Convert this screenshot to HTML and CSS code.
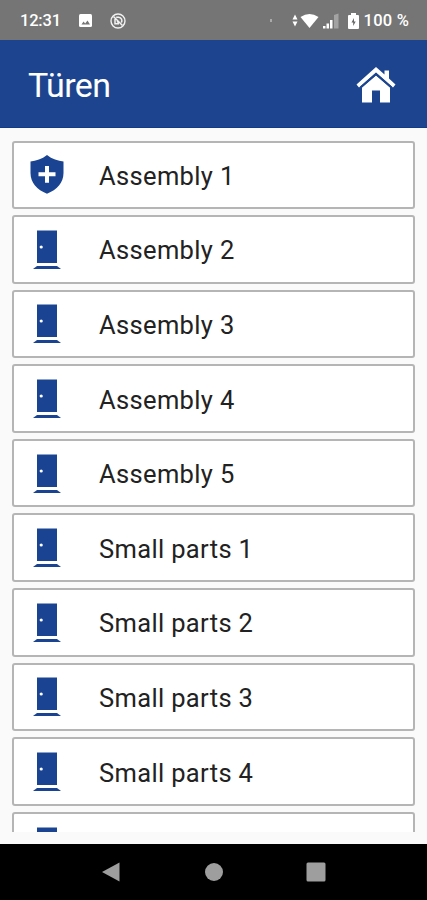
FILE: index.html
```html
<!DOCTYPE html>
<html lang="de">
<head>
    <meta charset="UTF-8">
    <meta name="viewport" content="width=device-width, initial-scale=1.0">
    <title>Türen</title>
    <link rel="stylesheet" href="styles.css">
</head>
<body>
    <!-- shared icons -->
    <svg class="icon-defs">
        <symbol id="icon-door" viewBox="0 0 36 42">
            <path d="M8 1.500h20v32.500H8z"/>
            <path d="M8 37h20l4 3H4z"/>
            <circle cx="12.2" cy="18" r="1.6" fill="#fff"/>
        </symbol>
        <symbol id="icon-shield" viewBox="0 0 36 42">
            <path d="M18 1C23 5 29 7 34.500 7.500V19C34.500 29 28 35.500 18 39.800C8 35.500 1.500 29 1.500 19V7.500C7 7 13 5 18 1z"/>
            <path d="M16 12h4v6.300h6.500v4H20v6.500h-4v-6.500H9.500v-4H16z" fill="#fff"/>
        </symbol>
    </svg>

    <div class="screen">
        <div class="status-bar">
            <span class="time">12:31</span>
            <svg class="status-image" width="13" height="13" viewBox="0 0 13 13">
                <rect width="13" height="13" rx="1.5" fill="#fff"/>
                <path d="M2.500 10.500l2-3 1.700 2 2.300-3 2.500 4z" fill="#757575"/>
            </svg>
            <svg class="status-app" width="16" height="16" viewBox="0 0 16 16" fill="none" stroke="#f2f2f2">
                <circle cx="8" cy="8" r="7" stroke-width="1.400"/>
                <path d="M3.500 3.500l9 9M5 6v4.800h4M6.200 4.200h2.500a3.400 3.400 0 0 1 2.600 5.300M7 8.200l2 2" stroke-width="1.500"/>
            </svg>
            <div class="status-right">
                <span class="dot"></span>
                <svg width="27" height="16" viewBox="0 0 27 16" fill="#fff">
                    <path d="M0.500 6.500L3 1.500l2.500 5zM0.500 8.500h5L3 13.500z"/>
                    <path d="M8.500 4Q17.500-2 26.500 4L17.500 15z"/>
                </svg>
                <svg class="signal" width="16" height="16" viewBox="0 0 16 16" fill="#fff">
                    <path d="M0 13h2.500v2.500H0zM3.500 10.500h2.500v5H3.500zM7 7h2.500v8.500H7z"/>
                    <path d="M11 2l4.500-1.500v15H11z" fill="#a3a3a3"/>
                </svg>
                <svg class="battery" width="11" height="16" viewBox="0 0 11 16">
                    <path d="M3 0h5v2h2q1 0 1 1v12q0 1-1 1H1q-1 0-1-1V3q0-1 1-1h2z" fill="#fff"/>
                    <path d="M6 5L3.500 9.500h1.700V13l2.500-4.500H6z" fill="#666"/>
                </svg>
                <span class="percent">100 %</span>
            </div>
        </div>

        <div class="app-bar">
            <div class="title">Türen</div>
            <svg class="home" width="40" height="36" viewBox="0 0 40 36">
                <path d="M20 8.500L34 20.500V35.500H24V23.500h-8v12H6V20.500z" fill="#fff"/>
                <path d="M20 0l8.500 7.500V3.500H33v8l6.500 6-2.500 3L20 5.500 3 20.500l-2.500-3z" fill="#fff"/>
                <path d="M4.500 20.500L20 7l15.500 13.500" fill="none" stroke="#1d458f" stroke-width="1.800"/>
            </svg>
        </div>

        <div class="list">
            <div class="item"><svg class="item-icon"><use href="#icon-shield"/></svg><span>Assembly 1</span></div>
            <div class="item"><svg class="item-icon"><use href="#icon-door"/></svg><span>Assembly 2</span></div>
            <div class="item"><svg class="item-icon"><use href="#icon-door"/></svg><span>Assembly 3</span></div>
            <div class="item"><svg class="item-icon"><use href="#icon-door"/></svg><span>Assembly 4</span></div>
            <div class="item"><svg class="item-icon"><use href="#icon-door"/></svg><span>Assembly 5</span></div>
            <div class="item"><svg class="item-icon"><use href="#icon-door"/></svg><span>Small parts 1</span></div>
            <div class="item"><svg class="item-icon"><use href="#icon-door"/></svg><span>Small parts 2</span></div>
            <div class="item"><svg class="item-icon"><use href="#icon-door"/></svg><span>Small parts 3</span></div>
            <div class="item"><svg class="item-icon"><use href="#icon-door"/></svg><span>Small parts 4</span></div>
            <div class="item"><svg class="item-icon"><use href="#icon-door"/></svg></div>
        </div>

        <div class="nav-bar">
            <svg width="20" height="20" viewBox="0 0 20 20"><path d="M0 10L17.500 0.500v19z"/></svg>
            <svg width="20" height="20" viewBox="0 0 20 20"><circle cx="10" cy="10" r="9"/></svg>
            <svg width="20" height="20" viewBox="0 0 20 20"><rect x="0.500" y="0.500" width="19" height="19" rx="1.500"/></svg>
        </div>
    </div>
</body>
</html>
```
FILE: styles.css
```css
* {
    margin: 0;
    padding: 0;
    box-sizing: border-box;
}

body {
    font-family: Roboto, "Liberation Sans", sans-serif;
    background: #fafafa;
    color: #222;
    height: 100vh;
    overflow: hidden;
}

.icon-defs {
    display: none;
}

.screen {
    height: 100vh;
    display: flex;
    flex-direction: column;
}

.status-bar {
    height: 40px;
    flex: none;
    display: flex;
    align-items: center;
    padding: 1px 18px 0 20px;
    background: #757575;
    color: #fff;
    font-size: 16.5px;
    font-weight: 500;
}

.time {
    width: 59px;
    letter-spacing: -0.2px;
}

.status-app {
    margin-left: 18px;
}

.status-right {
    margin-left: auto;
    display: flex;
    align-items: center;
}

.dot {
    width: 2px;
    height: 3px;
    margin-right: 20px;
    background: #aaa;
}

.signal {
    margin-left: 4px;
}

.battery {
    margin: 0 5px 0 9px;
}

.percent {
    letter-spacing: 0.2px;
}

.app-bar {
    height: 88px;
    flex: none;
    display: flex;
    align-items: center;
    justify-content: space-between;
    padding: 3px 31px 0 28px;
    background: #1d458f;
    border-bottom: 1px solid #113a88;
    color: #fff;
}

.title {
    font-size: 34px;
    letter-spacing: -0.6px;
}

.list {
    height: 704px;
    flex: none;
    display: flex;
    flex-direction: column;
    gap: 6.1px;
    padding: 12.5px 12px 0;
    overflow: hidden;
}

.item {
    height: 68.5px;
    flex: none;
    display: flex;
    align-items: center;
    padding: 1px 0 0 15px;
    background: #fff;
    border: 2px solid #b5b5b5;
    border-radius: 3px;
    font-size: 25.5px;
    letter-spacing: 0.35px;
}

.item span {
    padding-top: 1px;
}

.item-icon {
    width: 36px;
    height: 42px;
    margin-right: 34px;
    fill: #1a4491;
}

.nav-bar {
    height: 56px;
    flex: none;
    margin-top: auto;
    display: flex;
    align-items: center;
    justify-content: center;
    gap: 82px;
    background: #000;
    fill: #9e9e9e;
}
```
